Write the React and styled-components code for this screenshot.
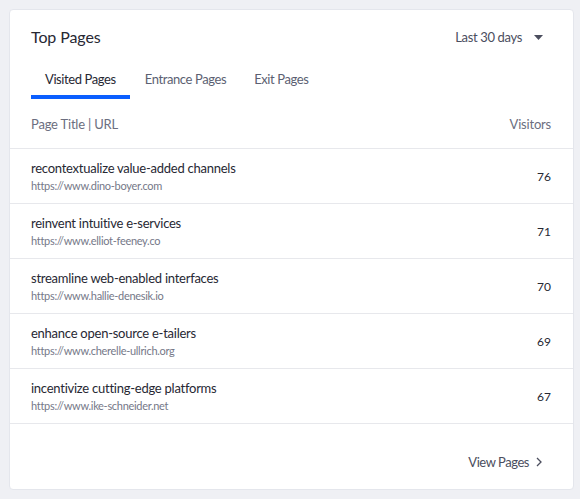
import React from "react";
import styled, { createGlobalStyle } from "styled-components";

const Global = createGlobalStyle`
  html, body { margin: 0; padding: 0; background: #eff0f4; }
  body { font-family: "Lato", "Open Sans", sans-serif; -webkit-font-smoothing: antialiased; }
  * { box-sizing: border-box; }
`;

const Page = styled.div`
  padding: 9px 6px 9px 9px;
  width: 580px;
  height: 499px;
`;

const Card = styled.div`
  background: #fff;
  border: 1px solid #e4e6ec;
  border-radius: 4px;
  height: 481px;
  display: flex;
  flex-direction: column;
`;

const Header = styled.div`
  display: flex;
  align-items: center;
  justify-content: space-between;
  padding: 16px 30px 0 21px;
`;

const Title = styled.h2`
  margin: 0;
  font-size: 16px;
  letter-spacing: -0.1px;
  font-weight: 400;
  color: #272833;
  line-height: 22px;
`;

const Range = styled.button`
  display: flex;
  align-items: center;
  gap: 12px;
  border: 0;
  background: none;
  padding: 0;
  font: inherit;
  font-size: 13px;
  letter-spacing: -0.35px;
  color: #4b4e5e;
  cursor: pointer;
`;

const Tabs = styled.div`
  display: flex;
  padding: 0 0 0 21px;
  margin-top: 14px;
`;

const Tab = styled.div`
  padding: 0 14px;
  height: 37px;
  display: flex;
  align-items: center;
  font-size: 13px;
  letter-spacing: -0.4px;
  color: ${p => (p.$active ? "#272833" : "#5c5f72")};
  border-bottom: 4px solid ${p => (p.$active ? "#0b5fff" : "transparent")};
  margin-right: ${p => (p.$active ? "1px" : "0")};
`;

const TableHead = styled.div`
  display: flex;
  justify-content: space-between;
  align-items: center;
  padding: 0 22px 0 21px;
  height: 50px;
  font-size: 13px;
  letter-spacing: -0.2px;
  color: #6b6e80;
  border-bottom: 1px solid #e7e8ec;
`;

const Row = styled.div`
  display: flex;
  justify-content: space-between;
  align-items: center;
  padding: 0 22px 0 21px;
  height: 55px;
  border-bottom: 1px solid #e7e8ec;
`;

const Cell = styled.div`
  display: flex;
  flex-direction: column;
  gap: 3px;
`;

const RowTitle = styled.div`
  font-size: 13px;
  letter-spacing: -0.25px;
  color: #272833;
`;

const Url = styled.div`
  font-size: 11px;
  letter-spacing: -0.3px;
  color: #757888;
`;

const Count = styled.div`
  font-size: 12px;
  color: #272833;
`;

const Footer = styled.div`
  flex: 1;
  display: flex;
  justify-content: flex-end;
  align-items: flex-end;
  padding: 0 31px 19px 0;
`;

const Link = styled.a`
  display: flex;
  align-items: center;
  gap: 7px;
  font-size: 13px;
  letter-spacing: -0.45px;
  color: #4b4e5e;
  text-decoration: none;
  cursor: pointer;
`;

const rows = [
  ["recontextualize value-added channels", "https://www.dino-boyer.com", 76],
  ["reinvent intuitive e-services", "https://www.elliot-feeney.co", 71],
  ["streamline web-enabled interfaces", "https://www.hallie-denesik.io", 70],
  ["enhance open-source e-tailers", "https://www.cherelle-ullrich.org", 69],
  ["incentivize cutting-edge platforms", "https://www.ike-schneider.net", 67],
];

export default function App() {
  return (
    <Page>
      <Global />
      <Card>
        <Header>
          <Title>Top Pages</Title>
          <Range>
            Last 30 days
            <svg width="9" height="5" viewBox="0 0 9 5"><path d="M0 0h9L4.5 5z" fill="#4b4e5e" /></svg>
          </Range>
        </Header>
        <Tabs>
          <Tab $active>Visited Pages</Tab>
          <Tab>Entrance Pages</Tab>
          <Tab>Exit Pages</Tab>
        </Tabs>
        <TableHead>
          <span>Page Title | URL</span>
          <span>Visitors</span>
        </TableHead>
        {rows.map(([t, u, n]) => (
          <Row key={u}>
            <Cell>
              <RowTitle>{t}</RowTitle>
              <Url>{u}</Url>
            </Cell>
            <Count>{n}</Count>
          </Row>
        ))}
        <Footer>
          <Link>
            View Pages
            <svg width="6" height="10" viewBox="0 0 6 10"><path d="M1 1l4 4-4 4" fill="none" stroke="#4b4e5e" strokeWidth="1.3" /></svg>
          </Link>
        </Footer>
      </Card>
    </Page>
  );
}
